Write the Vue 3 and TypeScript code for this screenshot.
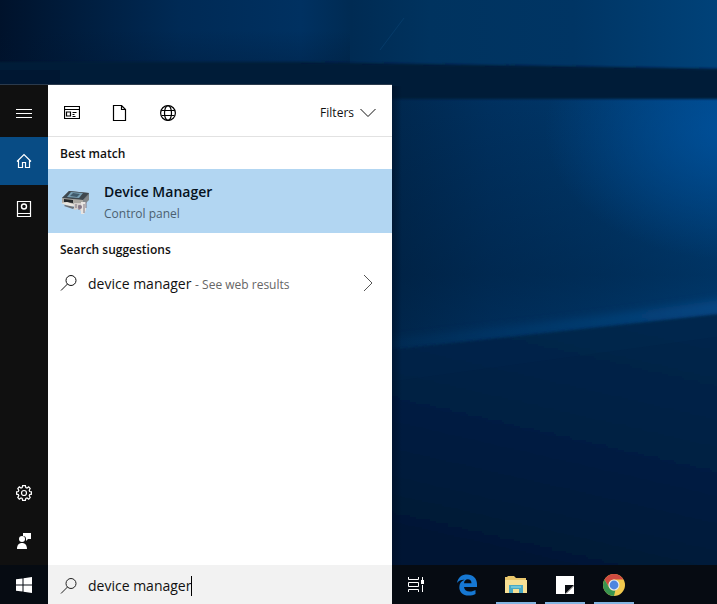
<script setup lang="ts">
import { ref } from 'vue'

interface TaskApp {
  id: 'edge' | 'explorer' | 'notes' | 'chrome'
  label: string
  running: boolean
}

const query = ref('device manager')
const apps: TaskApp[] = [
  { id: 'edge', label: 'Microsoft Edge', running: false },
  { id: 'explorer', label: 'File Explorer', running: true },
  { id: 'notes', label: 'Sticky Notes', running: true },
  { id: 'chrome', label: 'Google Chrome', running: true },
]
</script>

<template>
  <div class="desktop">
    <svg class="wallpaper" viewBox="0 0 717 604" preserveAspectRatio="none" aria-hidden="true">
      <defs>
        <linearGradient id="sky" x1="0" x2="1" y1="0" y2="0">
          <stop offset="0" stop-color="#00122b" />
          <stop offset=".1" stop-color="#001c3c" />
          <stop offset=".25" stop-color="#002a55" />
          <stop offset=".42" stop-color="#003161" />
          <stop offset=".49" stop-color="#002b53" />
          <stop offset=".6" stop-color="#00335f" />
          <stop offset=".8" stop-color="#003564" />
          <stop offset="1" stop-color="#004279" />
        </linearGradient>
        <linearGradient id="sky-fade" x1="0" x2="0" y1="0" y2="1">
          <stop offset="0" stop-color="#001530" stop-opacity="0" />
          <stop offset="1" stop-color="#001530" stop-opacity=".6" />
        </linearGradient>
        <linearGradient id="pane" gradientUnits="userSpaceOnUse" x1="392" x2="717" y1="0" y2="0">
          <stop offset="0" stop-color="#00284f" />
          <stop offset=".3" stop-color="#003160" />
          <stop offset=".65" stop-color="#00386b" />
          <stop offset="1" stop-color="#00427c" />
        </linearGradient>
        <radialGradient id="glow" gradientUnits="userSpaceOnUse" cx="0" cy="0" r="1" gradientTransform="translate(735 130) scale(190 130)">
          <stop offset="0" stop-color="#0054a2" stop-opacity=".8" />
          <stop offset="1" stop-color="#0054a2" stop-opacity="0" />
        </radialGradient>
        <linearGradient id="shade" x1="0" x2="0" y1="0" y2="1">
          <stop offset="0" stop-color="#001833" stop-opacity="0" />
          <stop offset=".7" stop-color="#001833" stop-opacity=".34" />
          <stop offset="1" stop-color="#001833" stop-opacity=".1" />
        </linearGradient>
        <linearGradient id="floor" gradientUnits="userSpaceOnUse" x1="600" x2="540" y1="320" y2="580">
          <stop offset="0" stop-color="#00274d" />
          <stop offset=".5" stop-color="#001f43" />
          <stop offset="1" stop-color="#001834" />
        </linearGradient>
        <linearGradient id="beam" x1="0" x2="1" y1="0" y2="0">
          <stop offset="0" stop-color="#0a4c87" stop-opacity=".25" />
          <stop offset="1" stop-color="#0a5ba5" stop-opacity=".8" />
        </linearGradient>
        <linearGradient id="panel-shadow" x1="0" x2="1" y1="0" y2="0">
          <stop offset="0" stop-color="#000c20" stop-opacity=".5" />
          <stop offset="1" stop-color="#000c20" stop-opacity="0" />
        </linearGradient>
        <filter id="soft" x="-10%" y="-50%" width="120%" height="200%"><feGaussianBlur stdDeviation="1" /></filter>
        <filter id="softer" x="-10%" y="-80%" width="120%" height="260%"><feGaussianBlur stdDeviation="4" /></filter>
      </defs>
      <rect width="717" height="604" fill="url(#sky)" />
      <rect y="30" width="350" height="40" fill="url(#sky-fade)" opacity=".5" />
      <path d="M380 50 404 18" stroke="#0b4474" stroke-width="1" opacity=".6" />
      <rect x="380" y="86" width="340" height="270" fill="url(#pane)" />
      <rect x="380" y="86" width="340" height="270" fill="url(#shade)" />
      <rect x="380" y="86" width="340" height="270" fill="url(#glow)" />
      <path d="M-10 62H300L730 69V99H380V88H-10Z" fill="#001a38" filter="url(#soft)" />
      <rect y="70" width="60" height="15" fill="#00122b" opacity=".5" />
      <path d="M380 340Q580 320 730 298V314L380 351Z" fill="url(#beam)" opacity=".55" filter="url(#softer)" />
      <path d="M380 351 730 313V610H380Z" fill="url(#floor)" filter="url(#soft)" />
      <path d="M380 383 730 335V610H380Z" fill="#00132c" opacity=".06" />
      <rect x="392" y="86" width="10" height="480" fill="url(#panel-shadow)" />
    </svg>

    <main class="workspace">
      <section class="search-panel" aria-label="Search">
        <nav class="rail" aria-label="Search navigation">
          <button class="rail-button menu" type="button" aria-label="Menu">
            <svg width="16" height="16" viewBox="0 0 16 16"><path d="M0 4.500h16M0 8.500h16M0 12.500h16" /></svg>
          </button>
          <button class="rail-button active" type="button" aria-label="Home">
            <svg width="16" height="16" viewBox="0 0 16 16"><path d="M1 8.500 8 1.500l7 7M2.500 7.500v7h4v-5h3v5h4v-7" stroke-width="1.200" /></svg>
          </button>
          <button class="rail-button" type="button" aria-label="Notebook">
            <svg width="16" height="18" viewBox="0 0 16 18"><path d="M1.500 1.500h13v15h-13zM1.500 13.500h13" stroke-width="1.200" /><circle cx="8" cy="6.500" r="2.500" stroke-width="1.400" /></svg>
          </button>
          <span class="rail-space"></span>
          <button class="rail-button" type="button" aria-label="Settings">
            <svg width="16" height="16" viewBox="0 0 16 16"><path d="M6.600.6h2.800l.4 2 1.200.5 1.700-1.200 1.500 1.700-1 1.700.5 1.200 1.700.3v2.400l-1.700.4-.5 1.200 1 1.700-1.500 1.700-1.700-1.200-1.200.5-.4 1.900H6.600l-.4-1.900-1.200-.5-1.700 1.200-1.500-1.700 1-1.700-.5-1.200L.6 9.200V6.800l1.700-.3.500-1.200-1-1.700 1.500-1.700L5 3.100l1.200-.5z" stroke-width="1.200" /><circle cx="8" cy="8" r="2.500" stroke-width="1.200" /></svg>
          </button>
          <button class="rail-button" type="button" aria-label="Feedback">
            <svg width="16" height="16" viewBox="0 0 16 16"><g class="solid"><circle cx="6" cy="6" r="3" /><path d="M1 16c0-4 2-6 5-6s5 2 5 6zM7 0h8v6h-3l-2 2V6c0-2-1-3-3-3z" /></g></svg>
          </button>
        </nav>

        <div class="results">
          <header class="toolbar">
            <button class="scope" type="button" aria-label="Apps">
              <svg width="16" height="16" viewBox="0 0 16 16"><path d="M.5 1.500h15v12H.5zM.5 4.500h15M2.500 7h4v4h-4zM8.500 7.500h4M8.500 9.500h2M8.500 11.500h3" /></svg>
            </button>
            <button class="scope" type="button" aria-label="Documents">
              <svg width="16" height="16" viewBox="0 0 16 16"><path d="M1.500.5h8l4 4v11h-12zM9.500.5v4h4" /></svg>
            </button>
            <button class="scope" type="button" aria-label="Web">
              <svg width="16" height="16" viewBox="0 0 16 16"><circle cx="8" cy="8" r="7.400" /><ellipse cx="8" cy="8" rx="3.500" ry="7.400" /><path d="M1.500 5.500h13M1.500 10.500h13" /></svg>
            </button>
            <button class="filters" type="button">
              Filters
              <svg width="16" height="10" viewBox="0 0 16 10"><path d="m.5 1 7.500 7.500L15.500 1" /></svg>
            </button>
          </header>

          <h2 class="group-title">Best match</h2>
          <button class="best-match" type="button">
            <svg class="device-icon" width="32" height="32" viewBox="0 0 32 32">
              <path d="m2 13 7-7 20 2v4l-6 9-20-2z" fill="#737b80" />
              <path d="m2 13 7-7 20 2-6 7z" fill="#3e484f" />
              <path d="m7 12 4-5 12 1-4 5z" fill="#78a0b5" />
              <path d="m10 11 3-3 7 1-3 3z" fill="#405b6c" />
              <path d="m2 13 21 2v6L2 18z" fill="#a9a7a1" />
              <path d="m4 14 9 1v3l-9-1z" fill="#25292b" />
              <path d="m23 15 6-5v5l-6 6z" fill="#82878a" />
              <path d="m1 18 6-1 9 3-5 2z" fill="#e9e6df" />
              <path d="m5 20 10 2-2 2-9-3z" fill="#6c7177" />
              <path d="M14 18h7v8l-3-2-4 1z" fill="#d3cfcb" />
              <path d="M21 17h5v8l-2 4h-3z" fill="#e9e5e2" />
              <path d="M16 19v4M19 20v5M24 19v9M26 17v6" stroke="#7e7680" />
              <circle cx="20" cy="22" r="2" fill="#857787" />
            </svg>
            <span class="match-text">
              <strong>Device Manager</strong>
              <span>Control panel</span>
            </span>
          </button>

          <h2 class="group-title">Search suggestions</h2>
          <button class="suggestion" type="button">
            <svg width="18" height="18" viewBox="0 0 18 18"><circle cx="11" cy="6.500" r="5" /><path d="M7.500 10 1 16.500" /></svg>
            <span class="suggestion-text">device manager <small>- See web results</small></span>
            <svg class="chevron" width="10" height="18" viewBox="0 0 10 18"><path d="m1 1 8 8-8 8" /></svg>
          </button>
        </div>
      </section>
    </main>

    <footer class="taskbar">
      <button class="start" type="button" aria-label="Start">
        <svg class="start-logo" width="16" height="16" viewBox="0 0 16 16"><path d="M0 2.300 6.500 1.400v6.100H0zM7.500 1.300 16 0v7.500H7.500zM0 8.500h6.500v6.100L0 13.700zM7.500 8.500H16V16l-8.500-1.300z" /></svg>
      </button>
      <label class="search-box">
        <svg width="18" height="18" viewBox="0 0 18 18"><circle cx="11" cy="6.500" r="5" /><path d="M7.500 10 1 16.500" /></svg>
        <input v-model="query" type="text" aria-label="Search Windows" />
        <span class="caret"></span>
      </label>
      <button class="task-view" type="button" aria-label="Task View">
        <svg width="18" height="16" viewBox="0 0 18 16"><path d="M1.500 0v2.500h10V0M1.500 15v-2.500h10V15M1.500 5.500h10v4h-10zM15.500 0v3M15.500 8v7" /><path d="M14 3h3v4h-3z" fill="#fff" stroke="none" /></svg>
      </button>
      <button
        v-for="app in apps"
        :key="app.id"
        class="task"
        :class="{ running: app.running }"
        type="button"
        :aria-label="app.label"
      >
        <svg v-if="app.id === 'edge'" width="22" height="22" viewBox="0 0 22 22">
          <path d="M1 9C2 3 6 .5 11 .5c6 0 10 4 10 9.500V13H8c.3 3 2.600 4.500 5.800 4.500 2.400 0 4.200-.6 5.700-1.500v4c-2 1-4.200 1.500-7 1.500-5.600 0-9.200-3.500-9.200-8.300C3.300 9.700 5.200 7 8.500 5.800 5.500 5.500 3 6.500 1 9zM8 9.200h7.500C15.500 6.700 14 5.300 11.800 5.300 9.600 5.300 8.200 7 8 9.200z" fill="#1678d3" />
        </svg>
        <svg v-else-if="app.id === 'explorer'" width="22" height="20" viewBox="0 0 22 20">
          <path d="M0 2h2l1-1h6l2 2h10v15H0z" fill="#e8c66c" />
          <path d="M0 5h22v13H0z" fill="#f7e095" />
          <path d="M4 18v-8h14v8h-4v-4H8v4z" fill="#49a9c5" />
          <path d="M6 11h10v2H6z" fill="#71c6d8" />
        </svg>
        <svg v-else-if="app.id === 'notes'" width="18" height="18" viewBox="0 0 18 18">
          <path d="M0 0h18v18H0z" fill="#fff" />
          <path d="M9 9h9l-9 9z" fill="#080b10" />
          <path d="m17.500 10-7.500 7.500" stroke="#666" />
        </svg>
        <svg v-else width="22" height="22" viewBox="0 0 22 22">
          <circle cx="11" cy="11" r="11" fill="#f1c94d" />
          <path d="M1.500 5.500A11 11 0 0 1 20.500 5.500H11a5.500 5.500 0 0 0-4.800 8.200z" fill="#cf4b40" />
          <path d="M1.500 5.500 6.200 13.800A5.500 5.500 0 0 0 12.400 16.300L11 22A11 11 0 0 1 1.500 5.500z" fill="#38944f" />
          <circle cx="11" cy="11" r="5.500" fill="#e6eaf0" />
          <circle cx="11" cy="11" r="4.400" fill="#4e86df" />
        </svg>
      </button>
    </footer>
  </div>
</template>

<style>
body {
  margin: 0;
}
</style>

<style scoped>
.desktop {
  position: relative;
  display: flex;
  flex-direction: column;
  min-height: 100vh;
  overflow: hidden;
  background: #001a38;
  font-family: 'Open Sans', 'Noto Sans', sans-serif;
  color: #111;
}

.wallpaper {
  position: absolute;
  inset: 0;
  width: 100%;
  height: 100%;
}

button {
  display: flex;
  align-items: center;
  justify-content: center;
  flex-shrink: 0;
  margin: 0;
  padding: 0;
  border: 0;
  background: none;
  color: inherit;
  font: inherit;
}

button svg,
.search-box svg {
  flex-shrink: 0;
  fill: none;
  stroke: currentColor;
}

.workspace {
  position: relative;
  display: flex;
  flex: 1;
  padding-top: 84px;
}

.search-panel {
  display: flex;
  width: 392px;
  max-width: 100%;
  border-top: 1px solid #2b3a4c;
  box-sizing: border-box;
}

.rail {
  display: flex;
  flex-direction: column;
  width: 48px;
  background: #101010;
  color: #fff;
}

.rail-button {
  width: 48px;
  height: 48px;
}

.rail-button.menu {
  height: 52px;
  padding-top: 4px;
}

.rail-button.active {
  background: #084c85;
}

.rail-space {
  flex: 1;
}

.solid {
  fill: #fff;
  stroke: none;
}

.results {
  flex: 1;
  min-width: 0;
  background: #fff;
}

.toolbar {
  display: flex;
  height: 47px;
  padding-top: 4px;
  border-bottom: 1px solid #e2e2e2;
}

.scope {
  width: 48px;
}

.scope svg {
  stroke: #000;
  stroke-width: 1.2;
}

.filters {
  gap: 6px;
  margin-left: auto;
  padding-right: 16px;
  font-size: 12px;
}

.group-title {
  margin: 0;
  padding: 2px 0 0 12px;
  font-size: 12px;
  font-weight: 600;
  line-height: 30px;
}

.best-match {
  justify-content: flex-start;
  gap: 12px;
  width: 100%;
  height: 64px;
  padding-left: 12px;
  background: #b2d6f2;
  text-align: left;
}

.best-match .device-icon {
  stroke: none;
}

.match-text {
  display: flex;
  flex-direction: column;
  padding-top: 2px;
  font-size: 12px;
  line-height: 20px;
  color: #4b5f70;
}

.match-text strong {
  font-size: 14px;
  font-weight: 600;
  line-height: 24px;
  color: #06121d;
}

.suggestion {
  justify-content: flex-start;
  gap: 10px;
  width: 100%;
  height: 36px;
  padding: 0 19px 0 12px;
}

.suggestion-text {
  font-size: 14px;
}

.suggestion-text small {
  font-size: 12px;
  color: #666;
}

.chevron {
  margin-left: auto;
  color: #555;
}

.taskbar {
  position: relative;
  display: flex;
  height: 39px;
  background: #060b12;
  color: #fff;
}

.start {
  width: 48px;
}

.start .start-logo {
  fill: #fff;
  stroke: none;
}

.search-box {
  display: flex;
  align-items: center;
  width: 344px;
  padding: 2px 0 0 12px;
  box-sizing: border-box;
  background: #f2f2f2;
  color: #222;
}

.search-box input {
  field-sizing: content;
  margin: 0 0 0 10px;
  padding: 0;
  border: 0;
  outline: 0;
  background: none;
  color: #111;
  font: inherit;
  font-size: 14px;
}

.caret {
  width: 1px;
  height: 20px;
  background: #000;
}

.task-view {
  width: 50px;
  padding-right: 2px;
}

.task {
  width: 49px;
}

.task svg {
  stroke: none;
}

.running {
  background: linear-gradient(#83b5e1, #83b5e1) center bottom / 40px 2px no-repeat;
}
</style>
